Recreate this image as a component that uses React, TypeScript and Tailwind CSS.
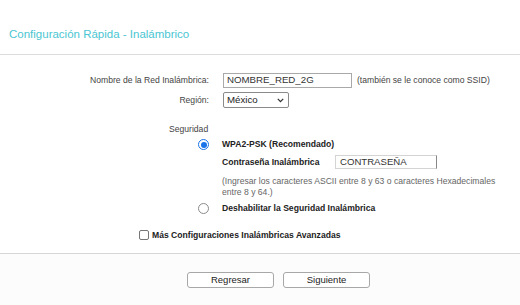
import { Fragment } from "react";

const Radio = ({ checked }: { checked: boolean }) => {
  return checked ? (
    <span className="flex h-[11px] w-[11px] items-center justify-center rounded-full border-[1.5px] border-[#1a73e8] bg-white">
      <span className="h-[6px] w-[6px] rounded-full bg-[#1a73e8]" />
    </span>
  ) : (
    <span className="h-[11px] w-[11px] rounded-full border border-[#8a8a8a] bg-white" />
  );
};

const App = () => {
  return (
    <Fragment>
      <div className="h-[305px] w-[520px] overflow-hidden bg-white font-['Liberation_Sans',Arial,sans-serif] text-[8.6px] text-[#444]">
        <div className="h-[55px] border-b border-[#dcdcdc] pl-[9px] pt-[27px]">
          <div className="text-[11.5px] leading-[14px] text-[#4ac6d2]">
            Configuración Rápida - Inalámbrico
          </div>
        </div>

        <div className="mt-[18px] flex h-[15px] items-center">
          <div className="w-[209px] text-right">Nombre de la Red Inalámbrica:</div>
          <div className="ml-[14px] flex h-[15px] w-[129px] items-center border border-[#a9a9a9] pl-[3px] text-[9.7px] text-[#333]">
            NOMBRE_RED_2G
          </div>
          <div className="ml-[5px]">(también se le conoce como SSID)</div>
        </div>

        <div className="mt-[4px] flex h-[16px] items-center">
          <div className="w-[209px] text-right">Región:</div>
          <div className="ml-[14px] flex h-[16px] w-[66px] items-center justify-between rounded-[2px] border border-[#8a8a8a] pl-[3px] pr-[4px] text-[9.7px] text-[#222]">
            <span>México</span>
            <svg width="7" height="5" viewBox="0 0 7 5" fill="none">
              <path d="M0.8 0.9 L3.5 3.6 L6.2 0.9" stroke="#333" strokeWidth="1.3" />
            </svg>
          </div>
        </div>

        <div className="mt-[16px] pl-[169px] leading-[11px]">Seguridad</div>

        <div className="mt-[4px] flex h-[11px] items-center pl-[198px]">
          <Radio checked={true} />
          <div className="ml-[13px] font-bold text-[#222]">WPA2-PSK (Recomendado)</div>
        </div>

        <div className="mt-[5px] flex h-[14px] items-center pl-[222px]">
          <div className="w-[113px] font-bold text-[#222]">Contraseña Inalámbrica</div>
          <div className="flex h-[14px] w-[102px] items-center border border-[#d4d4d4] border-r-[#888] pl-[4px] text-[9.6px] text-[#333]">
            CONTRASEÑA
          </div>
        </div>

        <div className="mt-[7px] pl-[222px] leading-[11px] text-[#666]">
          (Ingresar los caracteres ASCII entre 8 y 63 o caracteres Hexadecimales
          <br />
          entre 8 y 64.)
        </div>

        <div className="mt-[5px] flex h-[11px] items-center pl-[198px]">
          <Radio checked={false} />
          <div className="ml-[13px] font-bold text-[#222]">
            Deshabilitar la Seguridad Inalámbrica
          </div>
        </div>

        <div className="mt-[16px] flex h-[10px] items-center pl-[139px]">
          <span className="h-[10px] w-[10px] rounded-[2px] border border-[#767676] bg-white" />
          <div className="ml-[3px] font-bold text-[#222]">
            Más Configuraciones Inalámbricas Avanzadas
          </div>
        </div>

        <div className="mt-[13px] h-[52px] border-t border-[#d6d6d6] bg-[#fcfcfc]">
          <div className="mt-[18px] flex gap-[9px] pl-[187px]">
            <button className="flex h-[16px] w-[87px] items-center justify-center rounded-[3px] border border-[#a8a8a8] bg-white text-[9.5px] text-[#222]">
              Regresar
            </button>
            <button className="flex h-[16px] w-[87px] items-center justify-center rounded-[3px] border border-[#a8a8a8] bg-white text-[9.5px] text-[#222]">
              Siguiente
            </button>
          </div>
        </div>
      </div>
    </Fragment>
  );
};

export default App;
